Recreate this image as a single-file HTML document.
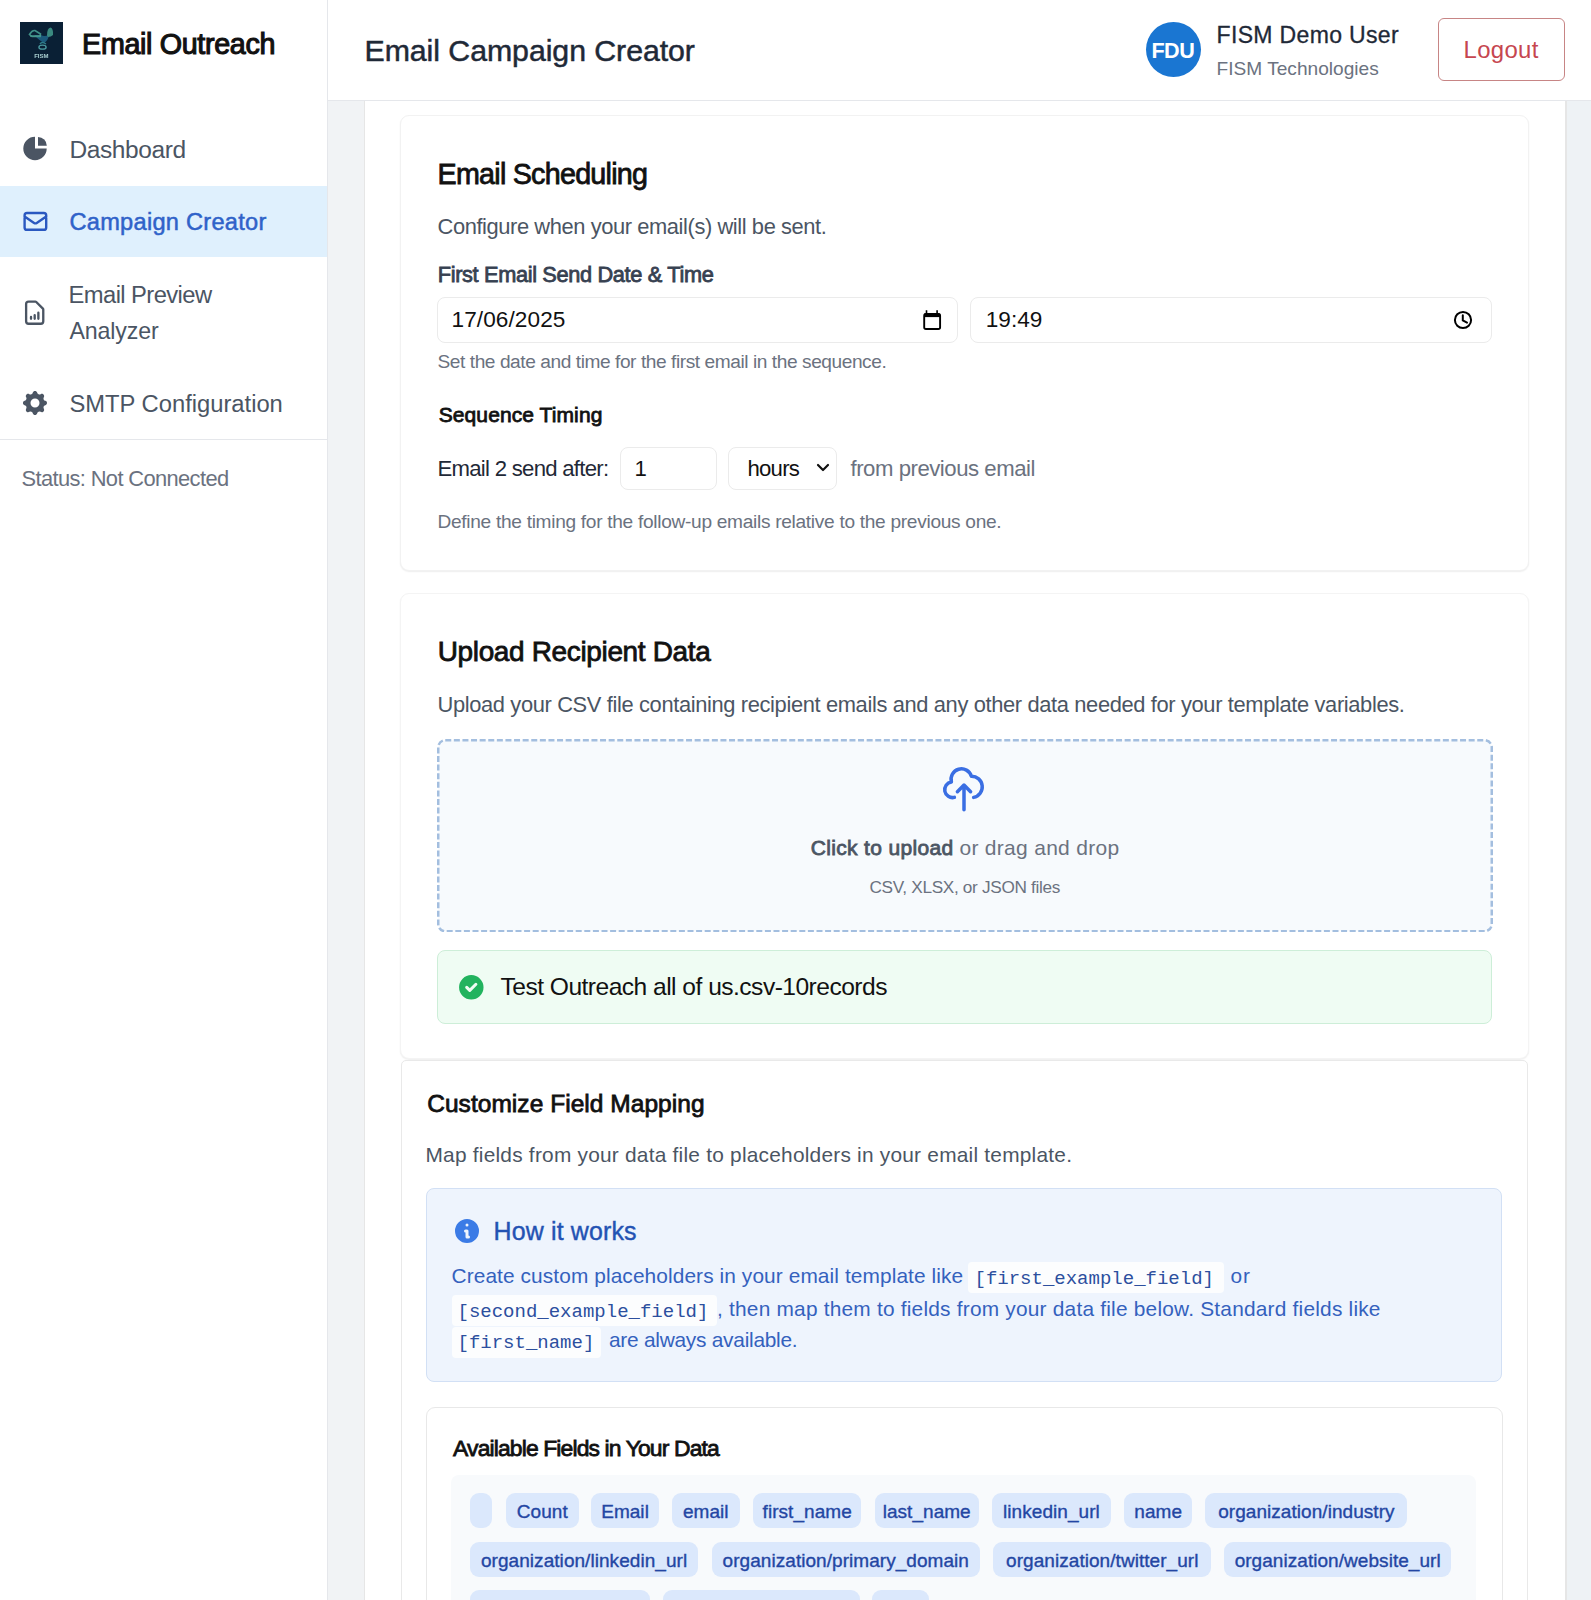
<!DOCTYPE html>
<html><head><meta charset="utf-8"><title>Email Campaign Creator</title>
<style>
html,body{margin:0;padding:0;width:1591px;height:1600px;overflow:hidden;background:#fff;}
body{position:relative;font-family:"Liberation Sans",sans-serif;}
.t{position:absolute;white-space:pre;}
.b{position:absolute;}
.chip{position:absolute;background:#dbe8fc;border-radius:9px;color:#2346a3;font-family:"Liberation Sans",sans-serif;font-size:19px;line-height:38px;text-align:center;white-space:pre;-webkit-text-stroke:0.35px #2346a3;letter-spacing:0.05px;}
</style></head><body>
<div class="b" style="left:0px;top:0px;width:328px;height:1600px;background:#fff;border-right:1px solid #e5e7eb;box-sizing:border-box;"></div>
<div class="b" style="left:328px;top:0px;width:1263px;height:101px;background:#fff;border-bottom:1px solid #e5e7eb;box-sizing:border-box;"></div>
<div class="b" style="left:328px;top:101px;width:1263px;height:1499px;background:#f1f3f5;"></div>
<div class="b" style="left:1566px;top:101px;width:25px;height:1499px;background:#eef2f5;"></div>
<div class="b" style="left:364px;top:101px;width:1203px;height:1499px;background:#fff;border-left:1px solid #e6e6e6;border-right:2px solid #e6e6e6;box-sizing:border-box;"></div>
<div class="b" style="left:20px;top:22px;width:43px;height:42px;background:#0a2035;"></div>
<svg class="b" style="left:20px;top:22px" width="43" height="42" viewBox="0 0 43 42">
<defs><filter id="bl" x="-20%" y="-20%" width="140%" height="140%"><feGaussianBlur stdDeviation="0.7"/></filter></defs>
<g filter="url(#bl)">
<path d="M14 13 Q20 19 24 21 Q28 19 29 13 Q24 15 21 13 Z" fill="#1d5a7c"/>
<path d="M9.5 12.5 Q12 8 15 8.5 L20.5 12 L20 14.5 L12 14.5 Z" fill="none" stroke="#3f8f86" stroke-width="1.6"/>
<path d="M10 14 L21 14" stroke="#4a9c8e" stroke-width="1.3"/>
<path d="M27 13.5 Q27 6 30.5 5.5 Q33.5 6.5 33 13 Q31 15 28 15 Z" fill="#3a8a80"/>
<path d="M20 22 Q22 19 26 22" stroke="#2f7d8a" stroke-width="1.4" fill="none"/>
<ellipse cx="22.5" cy="25.2" rx="3.6" ry="2" stroke="#4b9aa0" stroke-width="1.3" fill="none"/>
<text x="21.3" y="35.5" font-size="6" fill="#a9cfd0" text-anchor="middle" font-family="Liberation Sans" font-weight="700">FISM</text>
</g>
</svg>
<div class="t" style="left:82.1px;top:29.5px;font-size:28.70px;line-height:28.70px;color:#111111;letter-spacing:-0.339px;-webkit-text-stroke:1.1px #111111;">Email Outreach</div>
<div class="b" style="left:0px;top:186px;width:327px;height:71px;background:#dff0fd;"></div>
<svg class="b" style="left:20px;top:133px" width="30" height="30" viewBox="0 0 30 30" fill="#4b5563">
<path d="M15 3.8 A11.7 11.7 0 1 0 26.7 15.5 L15 15.5 Z"/>
<path d="M18 4 A8.8 8.8 0 0 1 26.8 12.8 L18 12.8 Z"/>
</svg>
<svg class="b" style="left:20.6px;top:206.5px" width="28.8" height="28.8" viewBox="0 0 24 24" fill="none" stroke="#2a58c0" stroke-width="2" stroke-linecap="round" stroke-linejoin="round">
<path d="M3 8l7.89 5.26a2 2 0 002.22 0L21 8M5 19h14a2 2 0 002-2V7a2 2 0 00-2-2H5a2 2 0 00-2 2v10a2 2 0 002 2z"/>
</svg>
<svg class="b" style="left:20.1px;top:297.8px" width="29.4" height="29.4" viewBox="0 0 24 24" fill="none" stroke="#4b5563" stroke-width="1.9" stroke-linecap="round" stroke-linejoin="round">
<path d="M9 17v-1.5m3 1.5v-3m3 3v-5m2 9H7a2 2 0 01-2-2V5a2 2 0 012-2h5.586a1 1 0 01.707.293l5.414 5.414a1 1 0 01.293.707V19a2 2 0 01-2 2z"/>
</svg>
<svg class="b" style="left:19.5px;top:388px" width="30" height="30" viewBox="0 0 20 20" fill="#4b5563">
<path fill-rule="evenodd" d="M11.49 3.17c-.38-1.56-2.6-1.56-2.98 0a1.532 1.532 0 01-2.286.948c-1.372-.836-2.942.734-2.106 2.106.54.886.061 2.042-.947 2.287-1.561.379-1.561 2.6 0 2.978a1.532 1.532 0 01.947 2.287c-.836 1.372.734 2.942 2.106 2.106a1.532 1.532 0 012.287.947c.379 1.561 2.6 1.561 2.978 0a1.533 1.533 0 012.287-.947c1.372.836 2.942-.734 2.106-2.106a1.533 1.533 0 01.947-2.287c1.561-.379 1.561-2.6 0-2.978a1.532 1.532 0 01-.947-2.287c.836-1.372-.734-2.942-2.106-2.106a1.532 1.532 0 01-2.287-.947zM10 13a3 3 0 100-6 3 3 0 000 6z" clip-rule="evenodd"/>
</svg>
<div class="t" style="left:69.5px;top:137.9px;font-size:24.49px;line-height:24.49px;color:#4b5563;letter-spacing:-0.409px;">Dashboard</div>
<div class="t" style="left:69.5px;top:210.7px;font-size:23.62px;line-height:23.62px;color:#2f62c9;letter-spacing:0.259px;-webkit-text-stroke:0.5px #2f62c9;">Campaign Creator</div>
<div class="t" style="left:68.5px;top:282.6px;font-size:23.77px;line-height:23.77px;color:#4b5563;letter-spacing:-0.577px;">Email Preview</div>
<div class="t" style="left:69.5px;top:319.6px;font-size:23.19px;line-height:23.19px;color:#4b5563;letter-spacing:-0.154px;">Analyzer</div>
<div class="t" style="left:69.5px;top:392.0px;font-size:23.77px;line-height:23.77px;color:#4b5563;letter-spacing:-0.014px;">SMTP Configuration</div>
<div class="b" style="left:0px;top:439px;width:327px;height:1px;background:#e5e7eb;"></div>
<div class="t" style="left:21.5px;top:468.3px;font-size:21.88px;line-height:21.88px;color:#6b7280;letter-spacing:-0.625px;">Status: Not Connected</div>
<div class="t" style="left:364.5px;top:35.6px;font-size:30.29px;line-height:30.29px;color:#1f2937;letter-spacing:-0.052px;-webkit-text-stroke:0.5px #1f2937;">Email Campaign Creator</div>
<div class="b" style="left:1146px;top:22px;width:55px;height:55px;background:#1a76d2;border-radius:50%;"></div>
<div class="t" style="left:1151.4px;top:39.7px;font-size:21.59px;line-height:21.59px;color:#ffffff;font-weight:700;letter-spacing:-0.5px;">FDU</div>
<div class="t" style="left:1216.5px;top:23.6px;font-size:23.04px;line-height:23.04px;color:#1f2937;letter-spacing:0.33px;-webkit-text-stroke:0.3px #1f2937;">FISM Demo User</div>
<div class="t" style="left:1216.5px;top:58.5px;font-size:19.13px;line-height:19.13px;color:#6b7280;letter-spacing:0.005px;">FISM Technologies</div>
<div class="b" style="left:1438px;top:18px;width:127px;height:63px;border:1px solid #c78585;border-radius:6px;box-sizing:border-box;"></div>
<div class="t" style="left:1463.5px;top:38.3px;font-size:23.91px;line-height:23.91px;color:#c6464f;letter-spacing:0.36px;">Logout</div>
<div class="b" style="left:400px;top:115px;width:1129px;height:456px;background:#fff;border:1px solid #f2f2f2;border-radius:9px;box-shadow:0 1px 1.5px rgba(0,0,0,0.07);box-sizing:border-box;"></div>
<div class="t" style="left:437.5px;top:159.5px;font-size:28.70px;line-height:28.70px;color:#111111;letter-spacing:-0.746px;-webkit-text-stroke:0.8px #111111;">Email Scheduling</div>
<div class="t" style="left:437.5px;top:216.3px;font-size:21.88px;line-height:21.88px;color:#4b5563;letter-spacing:-0.408px;">Configure when your email(s) will be sent.</div>
<div class="t" style="left:437.7px;top:264.4px;font-size:21.74px;line-height:21.74px;color:#374151;letter-spacing:-0.333px;-webkit-text-stroke:0.8px #374151;">First Email Send Date &amp; Time</div>
<div class="b" style="left:437px;top:297px;width:521px;height:46px;border:1px solid #ebebeb;border-radius:8px;box-sizing:border-box;background:#fff;"></div>
<div class="t" style="left:451.5px;top:308.6px;font-size:22.61px;line-height:22.61px;color:#111111;letter-spacing:0.081px;">17/06/2025</div>
<svg class="b" style="left:920px;top:308px" width="24" height="24" viewBox="0 0 24 24" fill="none" stroke="#000" stroke-width="1.9">
<rect x="4.2" y="6" width="15.9" height="15" rx="1.8"/><path d="M4.2 7.3 H20.1" stroke-width="3.6"/><path d="M6.5 2.2 V6.5 M17.1 2.2 V6.5" stroke-width="1.6"/>
</svg>
<div class="b" style="left:970px;top:297px;width:522px;height:46px;border:1px solid #ebebeb;border-radius:8px;box-sizing:border-box;background:#fff;"></div>
<div class="t" style="left:985.8px;top:308.6px;font-size:22.61px;line-height:22.61px;color:#111111;letter-spacing:0.0px;">19:49</div>
<svg class="b" style="left:1451px;top:308px" width="24" height="24" viewBox="0 0 24 24" fill="none" stroke="#000" stroke-width="2" stroke-linecap="round">
<circle cx="12" cy="12" r="8.1"/><path d="M11.8 7.2 V12.3 L16 14.6"/>
</svg>
<div class="t" style="left:437.5px;top:352.4px;font-size:19.13px;line-height:19.13px;color:#6b7280;letter-spacing:-0.43px;">Set the date and time for the first email in the sequence.</div>
<div class="t" style="left:438.7px;top:403.5px;font-size:21.01px;line-height:21.01px;color:#111111;letter-spacing:0.099px;-webkit-text-stroke:0.8px #111111;">Sequence Timing</div>
<div class="t" style="left:437.5px;top:457.5px;font-size:22.17px;line-height:22.17px;color:#1f2937;letter-spacing:-0.73px;">Email 2 send after:</div>
<div class="b" style="left:620px;top:447px;width:97px;height:43px;border:1px solid #ebebeb;border-radius:8px;box-sizing:border-box;background:#fff;"></div>
<div class="t" style="left:634.6px;top:457.5px;font-size:22.17px;line-height:22.17px;color:#111111;letter-spacing:0.0px;">1</div>
<div class="b" style="left:728px;top:447px;width:109px;height:43px;border:1px solid #ebebeb;border-radius:8px;box-sizing:border-box;background:#fff;"></div>
<div class="t" style="left:747.5px;top:457.5px;font-size:22.17px;line-height:22.17px;color:#111111;letter-spacing:-0.775px;">hours</div>
<svg class="b" style="left:815px;top:461px" width="16" height="14" viewBox="0 0 16 14" fill="none" stroke="#111" stroke-width="2.2" stroke-linecap="round" stroke-linejoin="round">
<path d="M3 4 L8 9 L13 4"/>
</svg>
<div class="t" style="left:850.5px;top:457.5px;font-size:22.17px;line-height:22.17px;color:#6b7280;letter-spacing:-0.467px;">from previous email</div>
<div class="t" style="left:437.5px;top:512.0px;font-size:19.13px;line-height:19.13px;color:#6b7280;letter-spacing:-0.298px;">Define the timing for the follow-up emails relative to the previous one.</div>
<div class="b" style="left:400px;top:593px;width:1129px;height:466px;background:#fff;border:1px solid #f4f4f4;border-radius:9px;box-shadow:0 1px 1.5px rgba(0,0,0,0.07);box-sizing:border-box;"></div>
<div class="t" style="left:437.7px;top:637.6px;font-size:27.97px;line-height:27.97px;color:#111111;letter-spacing:-0.34px;-webkit-text-stroke:0.8px #111111;">Upload Recipient Data</div>
<div class="t" style="left:437.5px;top:694.4px;font-size:21.88px;line-height:21.88px;color:#4b5563;letter-spacing:-0.363px;">Upload your CSV file containing recipient emails and any other data needed for your template variables.</div>
<svg class="b" style="left:437px;top:738.5px" width="1056" height="193.5" viewBox="0 0 1056 193.5"><rect x="1.25" y="1.25" width="1053.5" height="191" rx="7" fill="#f7fafd" stroke="#a3bedf" stroke-width="2.5" stroke-dasharray="6 2.6"/></svg>
<svg class="b" style="left:934px;top:760px" width="60" height="60" viewBox="0 0 60 60" fill="none" stroke="#3a6ee3" stroke-width="3.5" stroke-linecap="round" stroke-linejoin="round">
<path d="M20.4 37.4 A7.9 7.9 0 1 1 17.4 21.9 A10.4 10.4 0 0 1 37.4 16.2 A10.7 10.7 0 0 1 39.6 37.4"/>
<path d="M30 49.8 V25.5 M23.4 31.7 L30 25 L36.6 31.7"/>
</svg>
<div class="t" style="left:810.7px;top:836.5px;font-size:21.01px;line-height:21.01px;color:#4b5563;letter-spacing:0.335px;-webkit-text-stroke:0.8px #4b5563;">Click to upload</div>
<div class="t" style="left:959.5px;top:836.5px;font-size:21.01px;line-height:21.01px;color:#6b7280;letter-spacing:0.287px;">or drag and drop</div>
<div class="t" style="left:869.5px;top:879.2px;font-size:17.20px;line-height:17.20px;color:#6b7280;letter-spacing:-0.314px;">CSV, XLSX, or JSON files</div>
<div class="b" style="left:437px;top:950px;width:1055px;height:74px;background:#effcf3;border:1px solid #cdeed8;border-radius:8px;box-sizing:border-box;"></div>
<svg class="b" style="left:455.9px;top:971.8px" width="30.6" height="30.6" viewBox="0 0 20 20" fill="#22b35e"><path fill-rule="evenodd" d="M10 18a8 8 0 100-16 8 8 0 000 16zm3.707-9.293a1 1 0 00-1.414-1.414L9 10.586 7.707 9.293a1 1 0 00-1.414 1.414l2 2a1 1 0 001.414 0l4-4z" clip-rule="evenodd"/></svg>
<div class="t" style="left:500.5px;top:975.2px;font-size:24.60px;line-height:24.60px;color:#111111;letter-spacing:-0.528px;">Test Outreach all of us.csv-10records</div>
<div class="b" style="left:401px;top:1060px;width:1127px;height:640px;background:#fff;border:1px solid #e9e9e9;border-radius:5px;box-sizing:border-box;"></div>
<div class="t" style="left:427.2px;top:1092.1px;font-size:24.49px;line-height:24.49px;color:#111111;letter-spacing:0.051px;-webkit-text-stroke:0.8px #111111;">Customize Field Mapping</div>
<div class="t" style="left:425.5px;top:1144.6px;font-size:20.87px;line-height:20.87px;color:#4b5563;letter-spacing:0.228px;">Map fields from your data file to placeholders in your email template.</div>
<div class="b" style="left:426px;top:1188px;width:1076px;height:194px;background:#eef4fd;border:1px solid #d2e0f5;border-radius:8px;box-sizing:border-box;"></div>
<svg class="b" style="left:451.8px;top:1216px" width="30" height="30" viewBox="0 0 20 20" fill="#3b7be6"><path fill-rule="evenodd" d="M18 10a8 8 0 11-16 0 8 8 0 0116 0zm-7-4a1 1 0 11-2 0 1 1 0 012 0zM9 9a1 1 0 000 2v3a1 1 0 001 1h1a1 1 0 100-2v-3a1 1 0 00-1-1H9z" clip-rule="evenodd"/></svg>
<div class="t" style="left:493.5px;top:1219.4px;font-size:24.93px;line-height:24.93px;color:#2352b3;letter-spacing:0.166px;-webkit-text-stroke:0.4px #2352b3;">How it works</div>
<div class="t" style="left:451.5px;top:1266.4px;font-size:20.87px;line-height:20.87px;color:#3461bd;letter-spacing:0.094px;">Create custom placeholders in your email template like</div>
<div class="b" style="left:968px;top:1262px;width:256px;height:31px;background:#fcfdfe;border-radius:4px;"></div>
<div class="t" style="left:1230.5px;top:1266.4px;font-size:20.87px;line-height:20.87px;color:#3461bd;letter-spacing:0.8px;">or</div>
<div class="b" style="left:452px;top:1295px;width:265px;height:31px;background:#fcfdfe;border-radius:4px;"></div>
<div class="t" style="left:717.0px;top:1299.3px;font-size:20.87px;line-height:20.87px;color:#3461bd;letter-spacing:0.213px;">, then map them to fields from your data file below. Standard fields like</div>
<div class="b" style="left:452px;top:1327px;width:149px;height:31px;background:#fcfdfe;border-radius:4px;"></div>
<div class="t" style="left:609.0px;top:1330.4px;font-size:20.87px;line-height:20.87px;color:#3461bd;letter-spacing:-0.25px;">are always available.</div>
<div class="t" style="left:974.5px;top:1269.7px;font-family:'Liberation Mono',monospace;font-size:19.0px;line-height:19.0px;color:#2c4f9e;letter-spacing:0px;">[first_example_field]</div>
<div class="t" style="left:457.5px;top:1302.6px;font-family:'Liberation Mono',monospace;font-size:19.0px;line-height:19.0px;color:#2c4f9e;letter-spacing:0px;">[second_example_field]</div>
<div class="t" style="left:457.5px;top:1333.7px;font-family:'Liberation Mono',monospace;font-size:19.0px;line-height:19.0px;color:#2c4f9e;letter-spacing:0px;">[first_name]</div>
<div class="b" style="left:426px;top:1407px;width:1077px;height:293px;background:#fff;border:1px solid #e8e8e8;border-radius:9px;box-sizing:border-box;"></div>
<div class="t" style="left:453.1px;top:1436.5px;font-size:22.90px;line-height:22.90px;color:#111111;letter-spacing:-0.87px;-webkit-text-stroke:0.8px #111111;">Available Fields in Your Data</div>
<div class="b" style="left:451px;top:1475px;width:1025px;height:225px;background:#f8fafc;border-radius:8px;"></div>
<div class="chip" style="left:470.0px;top:1493.0px;width:22.2px;height:35px;"></div>
<div class="chip" style="left:506.0px;top:1493.0px;width:72.6px;height:35px;">Count</div>
<div class="chip" style="left:591.0px;top:1493.0px;width:68.1px;height:35px;">Email</div>
<div class="chip" style="left:671.9px;top:1493.0px;width:67.8px;height:35px;">email</div>
<div class="chip" style="left:753.1px;top:1493.0px;width:108.2px;height:35px;">first_name</div>
<div class="chip" style="left:874.5px;top:1493.0px;width:104.4px;height:35px;">last_name</div>
<div class="chip" style="left:992.3px;top:1493.0px;width:118.3px;height:35px;">linkedin_url</div>
<div class="chip" style="left:1124.0px;top:1493.0px;width:68.4px;height:35px;">name</div>
<div class="chip" style="left:1205.4px;top:1493.0px;width:202.0px;height:35px;">organization/industry</div>
<div class="chip" style="left:470.0px;top:1541.5px;width:228.2px;height:35px;">organization/linkedin_url</div>
<div class="chip" style="left:711.7px;top:1541.5px;width:268.2px;height:35px;">organization/primary_domain</div>
<div class="chip" style="left:993.4px;top:1541.5px;width:217.8px;height:35px;">organization/twitter_url</div>
<div class="chip" style="left:1224.2px;top:1541.5px;width:227.0px;height:35px;">organization/website_url</div>
<div class="chip" style="left:470.0px;top:1590.0px;width:179.5px;height:35px;"></div>
<div class="chip" style="left:662.5px;top:1590.0px;width:197.2px;height:35px;"></div>
<div class="chip" style="left:872.4px;top:1590.0px;width:56.3px;height:35px;"></div>
</body></html>
